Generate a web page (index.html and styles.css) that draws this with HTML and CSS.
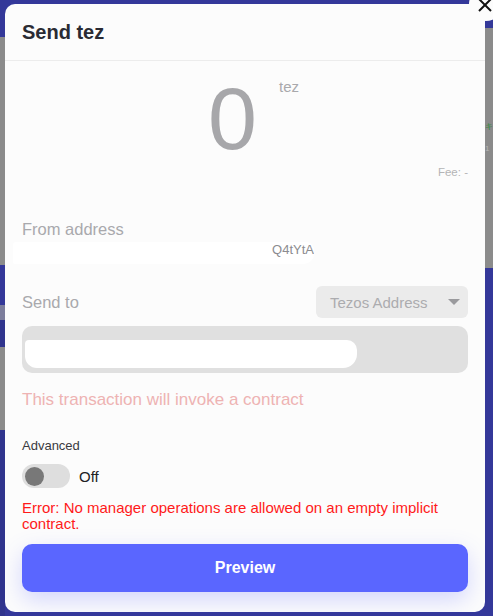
FILE: index.html
```html
<!DOCTYPE html>
<html lang="en">
<head>
    <meta charset="UTF-8">
    <title>Send tez</title>
    <link rel="stylesheet" href="styles.css">
</head>
<body>
    <div class="rail rail-left">
        <div class="band navy h37"></div>
        <div class="band grey h228"></div>
        <div class="band navy h40"></div>
        <div class="band slate h15"></div>
        <div class="band navy-dark h27"></div>
        <div class="band grey h83"></div>
        <div class="band navy-dark fill"></div>
    </div>

    <div class="dialog">
        <button class="close-btn" aria-label="Close">
            <svg width="14" height="14" viewBox="0 0 14 14">
                <path d="M1 1 L13 13 M13 1 L1 13" stroke="#111" stroke-width="2" fill="none"/>
            </svg>
        </button>

        <div class="dialog-header">
            <h2 class="dialog-title">Send tez</h2>
        </div>

        <div class="dialog-body">
            <div class="amount-row">
                <span class="amount">0</span>
                <span class="amount-unit">tez</span>
            </div>
            <div class="fee">Fee: -</div>

            <div class="field-label from-label">From address</div>
            <div class="address-line">
                <span class="redact redact-from">Q4tYtA</span>
            </div>

            <div class="send-row">
                <div class="field-label">Send to</div>
                <div class="select-box">
                    <span>Tezos Address</span>
                    <span class="caret"></span>
                </div>
            </div>

            <div class="to-input">
                <span class="redact redact-to"></span>
            </div>

            <div class="invoke-note">This transaction will invoke a contract</div>

            <div class="advanced-label">Advanced</div>
            <div class="toggle-row">
                <div class="toggle"><span class="knob"></span></div>
                <span class="toggle-text">Off</span>
            </div>

            <div class="error-text">Error: No manager operations are allowed on an empty implicit contract.</div>

            <button class="preview-btn">Preview</button>
        </div>
    </div>

    <div class="rail rail-right">
        <div class="band navy h28"></div>
        <div class="band grey h148 rail-text">
            <span class="green-bit">キ</span>
            <span class="grey-bit">1</span>
        </div>
        <div class="band navy fill"></div>
    </div>
</body>
</html>
```

FILE: styles.css
```css
body {
    margin: 0;
    height: 616px;
    overflow: hidden;
    display: flex;
    background-color: #34389a;
    font-family: 'Liberation Sans', Arial, sans-serif;
}

/* backdrop strips visible at the sides */
.rail {
    display: flex;
    flex-direction: column;
    overflow: hidden;
}

.rail-left {
    width: 5px;
}

.rail-right {
    flex: 1;
}

.navy { background-color: #343899; }
.navy-dark { background-color: #30348d; }
.grey { background-color: #8b8b8b; }
.slate { background-color: #7c7d9c; }

.h15 { height: 15px; }
.h27 { height: 27px; }
.h28 { height: 28px; }
.h37 { height: 37px; }
.h40 { height: 40px; }
.h83 { height: 83px; }
.h148 { height: 148px; }
.h228 { height: 228px; }
.fill { flex: 1; }

.rail-text {
    display: flex;
    flex-direction: column;
    padding-top: 92px;
    font-size: 8px;
    line-height: 14px;
    white-space: nowrap;
}

.green-bit {
    color: #2f8a3b;
}

.grey-bit {
    color: #b5b5b5;
    margin-top: 8px;
}

/* dialog */
.dialog {
    position: relative;
    width: 480px;
    height: 608px;
    margin-top: 4px;
    background-color: #fcfcfc;
    border-radius: 10px;
    display: flex;
    flex-direction: column;
}

.close-btn {
    position: absolute;
    top: -17px;
    right: -18px;
    width: 34px;
    height: 34px;
    border: none;
    border-radius: 50%;
    background-color: #fcfcfc;
    padding: 0;
    display: flex;
    align-items: center;
    justify-content: center;
}

.close-btn svg {
    margin-top: 2px;
    margin-right: 3px;
}

.dialog-header {
    height: 56px;
    padding: 0 17px;
    border-bottom: 1px solid #ececec;
    display: flex;
    align-items: center;
}

.dialog-title {
    margin: 0;
    font-size: 20px;
    font-weight: bold;
    color: #2a2b33;
}

.dialog-body {
    padding: 0 17px;
    display: flex;
    flex-direction: column;
}

.amount-row {
    margin-top: 14px;
    padding-left: 17px;
    display: flex;
    justify-content: center;
    gap: 22px;
}

.amount {
    font-size: 88px;
    line-height: 88px;
    color: #a7a7aa;
}

.amount-unit {
    margin-top: 4px;
    font-size: 15px;
    line-height: 15px;
    color: #a9a9ac;
}

.fee {
    margin-top: 3px;
    text-align: right;
    font-size: 11.5px;
    line-height: 13px;
    color: #b4b4b6;
}

.field-label {
    font-size: 16.5px;
    line-height: 18px;
    color: #a9a9ad;
}

.from-label {
    margin-top: 41px;
}

.address-line {
    margin-top: 4px;
    margin-left: -9px;
    height: 24px;
}

.redact {
    display: block;
    background-color: #ffffff;
}

.redact-from {
    width: 301px;
    height: 22px;
    border-radius: 3px 8px 10px 2px;
    text-align: right;
    font-size: 13px;
    line-height: 16px;
    color: #8c8c90;
    overflow: hidden;
}

.send-row {
    margin-top: 20px;
    display: flex;
    justify-content: space-between;
    align-items: center;
}

.select-box {
    width: 152px;
    height: 32px;
    box-sizing: border-box;
    padding: 0 8px 0 14px;
    border-radius: 6px;
    background-color: #ebebeb;
    display: flex;
    align-items: center;
    justify-content: space-between;
    font-size: 15px;
    color: #acacaf;
}

.caret {
    width: 0;
    height: 0;
    border-left: 6px solid transparent;
    border-right: 6px solid transparent;
    border-top: 6px solid #9a9a9d;
}

.to-input {
    margin-top: 8px;
    height: 47px;
    border-radius: 10px;
    background-color: #e0e0e0;
    padding: 14px 0 0 3px;
    box-sizing: border-box;
}

.redact-to {
    width: 332px;
    height: 28px;
    border-radius: 4px 10px 14px 12px;
}

.invoke-note {
    margin-top: 18px;
    font-size: 17px;
    line-height: 18px;
    color: #eeb3b3;
}

.advanced-label {
    margin-top: 29px;
    font-size: 13px;
    line-height: 16px;
    color: #3a3a40;
}

.toggle-row {
    margin-top: 10px;
    display: flex;
    align-items: center;
    gap: 9px;
}

.toggle {
    width: 48px;
    height: 24px;
    border-radius: 12px;
    background-color: #dedede;
    display: flex;
    align-items: center;
    padding-left: 3px;
    box-sizing: border-box;
}

.knob {
    width: 19px;
    height: 19px;
    border-radius: 50%;
    background-color: #787878;
}

.toggle-text {
    font-size: 15px;
    color: #222;
}

.error-text {
    margin-top: 12px;
    font-size: 15px;
    line-height: 16px;
    color: #ff1a1a;
}

.preview-btn {
    margin-top: 12px;
    height: 48px;
    border: none;
    border-radius: 10px;
    background-color: #5a66ff;
    color: white;
    font-family: 'Liberation Sans', Arial, sans-serif;
    font-size: 16px;
    font-weight: bold;
    box-shadow: 0 8px 22px rgba(90, 102, 255, 0.25);
}
```
